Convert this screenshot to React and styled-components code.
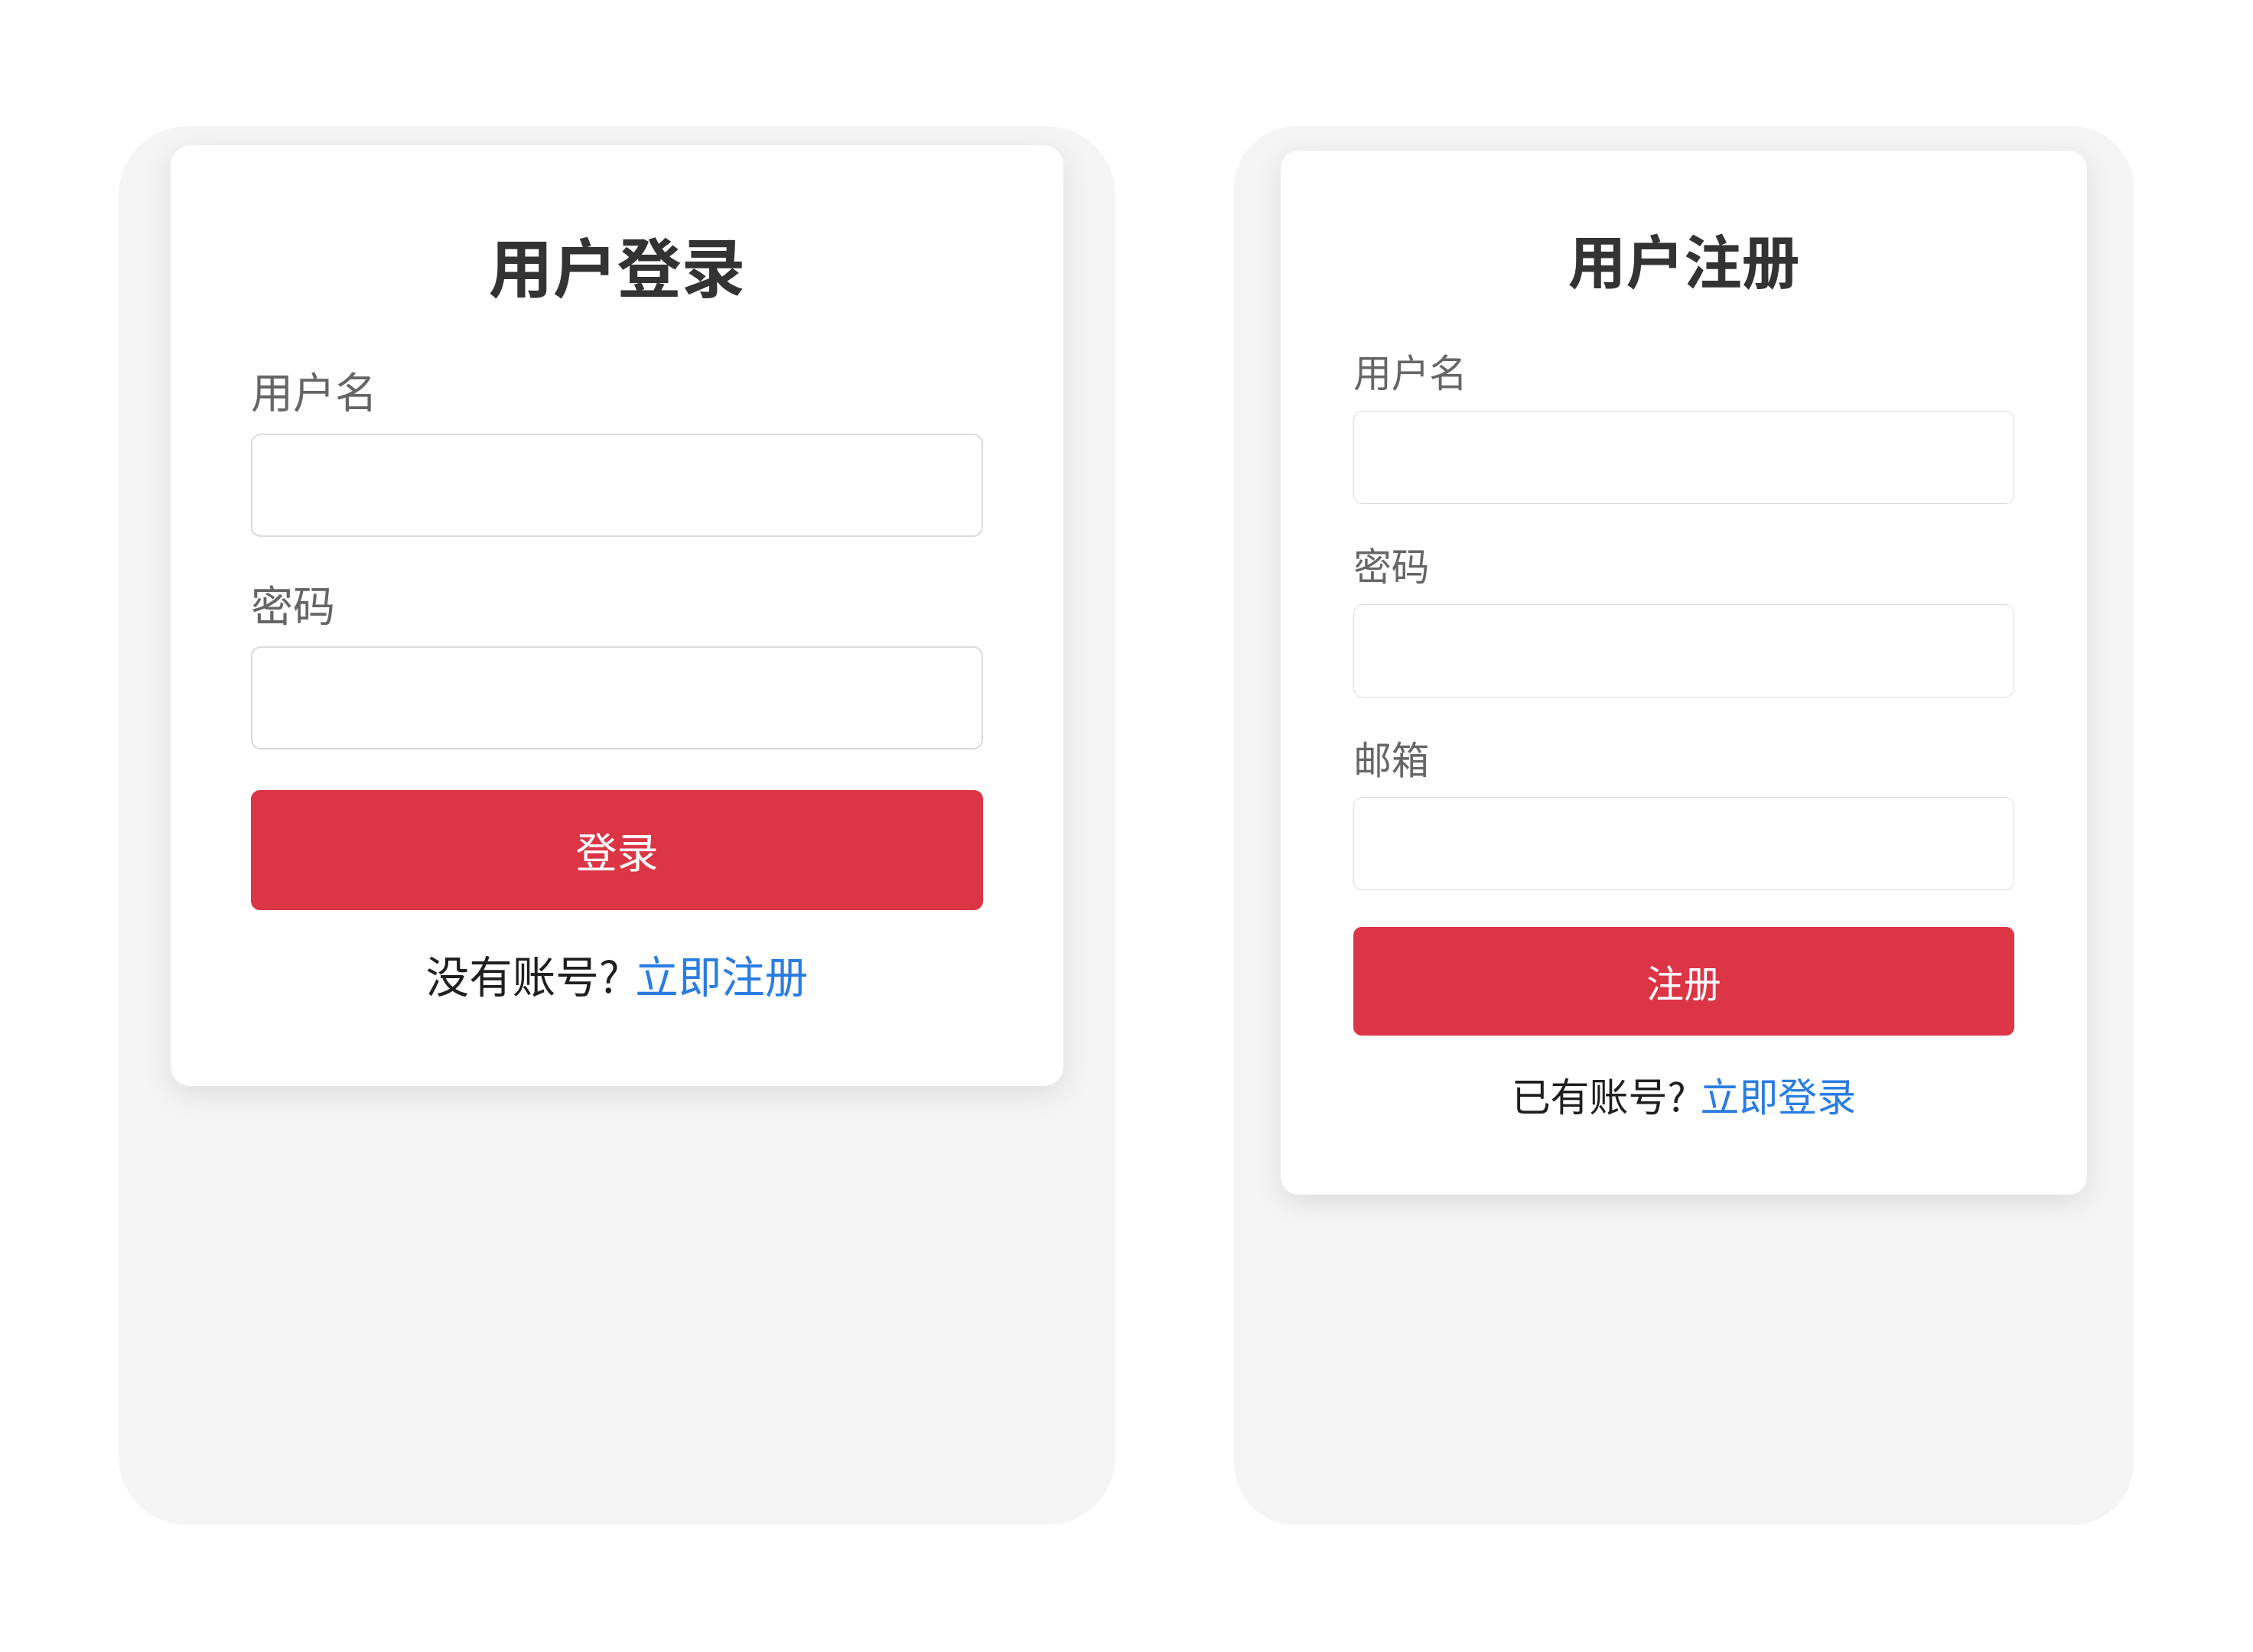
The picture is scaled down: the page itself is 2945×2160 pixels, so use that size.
import React from "react";
import styled, { createGlobalStyle } from "styled-components";

const GlobalStyle = createGlobalStyle`
  html, body {
    margin: 0;
    padding: 0;
    background: #ffffff;
  }
  body {
    font-family: "Noto Sans CJK SC", "Noto Sans", "Liberation Sans", sans-serif;
  }
  * { box-sizing: border-box; }
`;

const Page = styled.main`
  display: flex;
  align-items: flex-start;
  gap: 155px;
  padding: 165px 155px 0;
  width: 2945px;
  min-height: 2160px;
`;

const Screen = styled.section`
  width: ${(p) => 1303 * p.$s}px;
  height: 1829px;
  background: #f5f5f5;
  border-radius: ${(p) => 90 * p.$s}px;
  padding-top: ${(p) => p.$top}px;
  display: flex;
  justify-content: center;
  align-items: flex-start;
  flex-shrink: 0;
`;

const Card = styled.div`
  width: ${(p) => 1167 * p.$s}px;
  background: #ffffff;
  border-radius: ${(p) => 26 * p.$s}px;
  padding: ${(p) => `${106 * p.$s}px ${105 * p.$s}px ${p.$bottom * p.$s}px`};
  box-shadow: 0 ${(p) => 10 * p.$s}px ${(p) => 40 * p.$s}px rgba(0, 0, 0, 0.1);
`;

const Title = styled.h1`
  margin: 0;
  text-align: center;
  font-size: ${(p) => 84 * p.$s}px;
  line-height: 1.2;
  font-weight: 700;
  color: #333333;
`;

const Form = styled.form`
  display: flex;
  flex-direction: column;
  margin-top: ${(p) => 78.5 * p.$s}px;
`;

const FieldStack = styled.div`
  display: flex;
  flex-direction: column;
  gap: ${(p) => p.$gap * p.$s}px;
`;

const Field = styled.div`
  display: flex;
  flex-direction: column;
  gap: ${(p) => 23.5 * p.$s}px;
`;

const Label = styled.label`
  font-size: ${(p) => 55 * p.$s}px;
  line-height: ${(p) => 68 * p.$s}px;
  color: #666666;
`;

const Input = styled.input`
  width: 100%;
  height: ${(p) => 135 * p.$s}px;
  border: ${(p) => 2 * p.$s}px solid #dadada;
  border-radius: ${(p) => 13 * p.$s}px;
  background: #ffffff;
  outline: none;
  padding: 0 ${(p) => 24 * p.$s}px;
  font-size: ${(p) => 48 * p.$s}px;
  font-family: inherit;
`;

const SubmitButton = styled.button`
  margin-top: ${(p) => 53 * p.$s}px;
  width: 100%;
  height: ${(p) => 157 * p.$s}px;
  border: none;
  border-radius: ${(p) => 12 * p.$s}px;
  background: #dc3545;
  color: #ffffff;
  font-family: inherit;
  font-size: ${(p) => 54 * p.$s}px;
  cursor: pointer;
`;

const Footer = styled.p`
  margin: ${(p) => p.$top * p.$s}px 0 0;
  text-align: center;
  font-size: ${(p) => 56.5 * p.$s}px;
  line-height: ${(p) => 70 * p.$s}px;
  color: #1f1f1f;
`;

const Link = styled.a`
  color: #2a7de1;
  text-decoration: none;
  margin-left: ${(p) => 8 * p.$s}px;
`;

function AuthCard({ s, top, gap, footerGap, bottom, title, fields, action, prompt, linkText }) {
  return (
    <Screen $s={s} $top={top}>
      <Card $s={s} $bottom={bottom}>
        <Title $s={s}>{title}</Title>
        <Form $s={s} onSubmit={(e) => e.preventDefault()}>
          <FieldStack $s={s} $gap={gap}>
            {fields.map((f) => (
              <Field key={f.label} $s={s}>
                <Label $s={s}>{f.label}</Label>
                <Input $s={s} type={f.type} />
              </Field>
            ))}
          </FieldStack>
          <SubmitButton $s={s} type="submit">
            {action}
          </SubmitButton>
        </Form>
        <Footer $s={s} $top={footerGap}>
          {prompt}
          <Link $s={s} href="#">
            {linkText}
          </Link>
        </Footer>
      </Card>
    </Screen>
  );
}

export default function App() {
  return (
    <>
      <GlobalStyle />
      <Page>
        <AuthCard
          s={1}
          top={25}
          gap={52}
          footerGap={48}
          bottom={112}
          title="用户登录"
          fields={[
            { label: "用户名", type: "text" },
            { label: "密码", type: "password" },
          ]}
          action="登录"
          prompt="没有账号? "
          linkText="立即注册"
        />
        <AuthCard
          s={0.9025}
          top={32}
          gap={53.5}
          footerGap={51}
          bottom={110}
          title="用户注册"
          fields={[
            { label: "用户名", type: "text" },
            { label: "密码", type: "password" },
            { label: "邮箱", type: "email" },
          ]}
          action="注册"
          prompt="已有账号? "
          linkText="立即登录"
        />
      </Page>
    </>
  );
}
